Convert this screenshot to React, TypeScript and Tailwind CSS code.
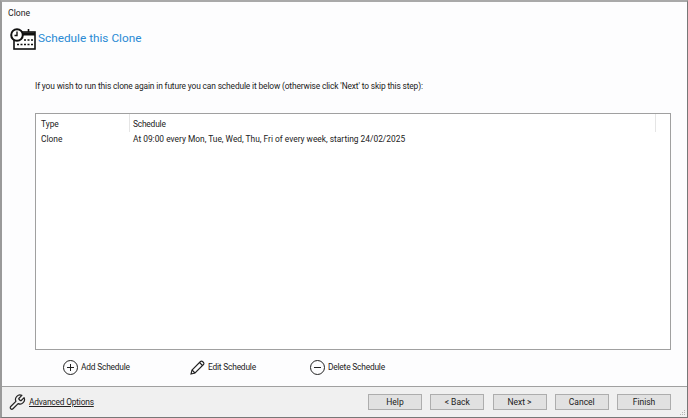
import React from "react";

const font = { fontFamily: 'Roboto, "Open Sans", sans-serif' };

function Btn({ label }: { label: string }) {
  return (
    <button className="w-[54px] h-[16px] flex items-center justify-center bg-[#e1e1e1] border border-[#adadad] text-[8.5px] text-[#1a1a1a] leading-none">
      {label}
    </button>
  );
}

function Action({ icon, label, className }: { icon: React.ReactNode; label: string; className: string }) {
  return (
    <div className={`flex items-center gap-[3px] text-[8.4px] tracking-[-0.2px] text-[#222] ${className}`}>
      {icon}
      <span>{label}</span>
    </div>
  );
}

const CircleIcon = ({ plus }: { plus?: boolean }) => (
  <svg width="15" height="15" viewBox="0 0 15 15" fill="none" stroke="#222" strokeWidth="1">
    <circle cx="7.5" cy="7.5" r="7" />
    <path d="M4 7.5h7" />
    {plus && <path d="M7.5 4v7" />}
  </svg>
);

export default function App() {
  return (
    <div style={font} className="w-[688px] h-[418px] flex flex-col bg-[#fdfdfe] border-t-2 border-l-2 border-r border-b border-t-[#a9a9a9] border-l-[#9a9a9a] border-r-[#777] border-b-[#777] overflow-hidden">
      <div className="h-[22px] pl-[6px] pt-[4px] text-[8.7px] leading-[14px] text-[#222]">Clone</div>
      <div className="h-[28px] flex items-center pl-[8px] pt-[1px]">
        <svg width="26" height="22" viewBox="0 0 26 22" fill="none" stroke="#111">
          <rect x="4" y="4" width="21" height="17" fill="#fff" strokeWidth="1.6" />
          <path d="M12 6h13" strokeWidth="3" />
          <path d="M18.5 1v3" strokeWidth="1.6" />
          <circle cx="7" cy="7" r="5.8" fill="#fff" strokeWidth="2" />
          <path d="M7 3.5v4H4.5" strokeWidth="1.4" />
          <path d="M14 12h2M17.5 12h2M21 12h2M7 16.5h2M10.5 16.5h2M14 16.5h2M17.5 16.5h2M21 16.5h2" strokeWidth="1.6" />
        </svg>
        <span className="ml-[2px] text-[11.8px] leading-none text-[#2a8ad4]">Schedule this Clone</span>
      </div>
      <div className="mt-[27px] pl-[33px] h-[14px] text-[8.4px] tracking-[-0.14px] leading-[14px] text-[#222]">
        If you wish to run this clone again in future you can schedule it below (otherwise click 'Next' to skip this step):
      </div>
      <div className="mt-[20px] ml-[33px] w-[636px] h-[237px] shrink-0 bg-white border border-[#a0a0a0] text-[8.4px] text-[#222]">
        <div className="h-[18px] flex">
          <div className="w-[94px] h-[18px] pl-[5px] border-r border-[#e5e5e5] leading-[20px]">Type</div>
          <div className="w-[526px] h-[18px] pl-[3px] border-r border-[#e5e5e5] tracking-[-0.2px] leading-[20px]">Schedule</div>
        </div>
        <div className="flex h-[14px] leading-[14px]">
          <div className="w-[94px] pl-[5px]">Clone</div>
          <div className="pl-[3px]">At 09:00 every Mon, Tue, Wed, Thu, Fri of every week, starting 24/02/2025</div>
        </div>
      </div>
      <div className="h-[36px] pb-[2px] flex items-center">
        <Action className="ml-[61px] w-[127px]" icon={<CircleIcon plus />} label="Add Schedule" />
        <Action
          className="w-[120px]"
          label="Edit Schedule"
          icon={
            <svg width="15" height="15" viewBox="0 0 15 15" fill="none" stroke="#222" strokeWidth="1.1">
              <path d="M1 14l1-4L10.5 1.5a1.4 1.4 0 0 1 2 0l1 1a1.4 1.4 0 0 1 0 2L5 13z" />
              <path d="M2 10l3 3M9.5 2.5l3 3" />
            </svg>
          }
        />
        <Action className="" icon={<CircleIcon />} label="Delete Schedule" />
      </div>
      <div className="flex-1 flex items-center bg-[#f0f0f0] border-t border-[#a0a0a0] relative">
        <svg className="ml-[6px]" width="18" height="19" viewBox="0 0 24 24" fill="none" stroke="#222" strokeWidth="1.6" strokeLinejoin="round">
          <path d="M14.7 6.3a1 1 0 0 0 0 1.4l1.6 1.6a1 1 0 0 0 1.4 0l3.77-3.77a6 6 0 0 1-7.94 7.94l-6.91 6.91a2.12 2.12 0 0 1-3-3l6.91-6.91a6 6 0 0 1 7.94-7.94z" />
        </svg>
        <span className="ml-[3px] text-[8.4px] tracking-[-0.2px] underline text-[#222]">Advanced Options</span>
        <div className="ml-auto mr-[16px] flex gap-[8.25px]">
          <Btn label="Help" />
          <Btn label="< Back" />
          <Btn label="Next >" />
          <Btn label="Cancel" />
          <Btn label="Finish" />
        </div>
        <svg className="absolute right-[1px] bottom-[1px]" width="6" height="6" viewBox="0 0 6 6" fill="#b5b5b5">
          <rect x="4" y="0" width="1" height="1" />
          <rect x="2" y="2" width="1" height="1" />
          <rect x="4" y="2" width="1" height="1" />
          <rect x="0" y="4" width="1" height="1" />
          <rect x="2" y="4" width="1" height="1" />
          <rect x="4" y="4" width="1" height="1" />
        </svg>
      </div>
    </div>
  );
}
